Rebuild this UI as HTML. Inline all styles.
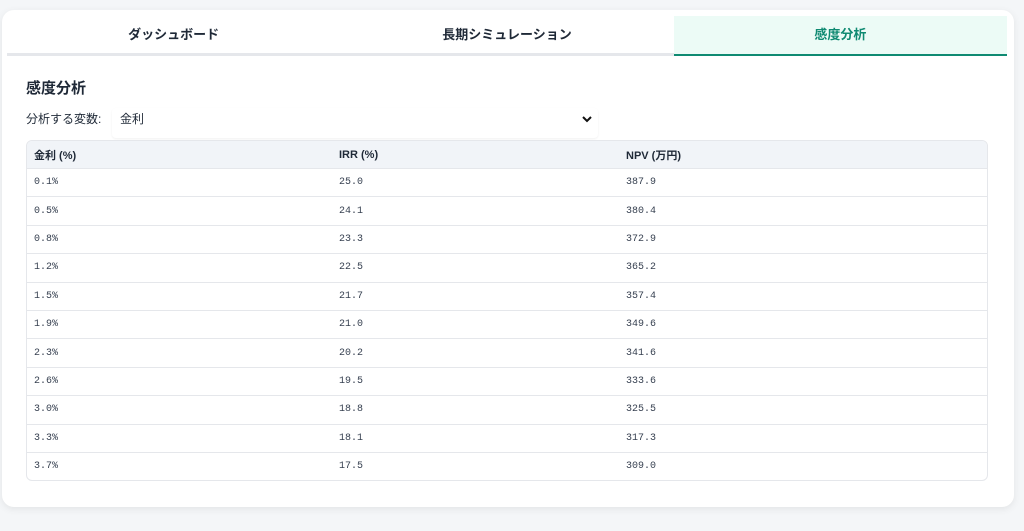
<!DOCTYPE html><html><head><meta charset="utf-8"><style>
body{margin:0;width:1024px;height:531px;background:#f4f6f8;font-family:"Liberation Sans","Noto Sans CJK JP",sans-serif;color:#1f2937;overflow:hidden}
.card{position:absolute;left:2px;top:10px;width:1012px;height:497px;background:#fff;border-radius:12px;box-shadow:0 2px 8px rgba(0,0,0,.08)}
.tabs{position:absolute;left:5px;top:6px;width:1000px;height:37px;border-bottom:3px solid #e5e7eb;display:flex}
.tab{flex:1;text-align:center;line-height:37px;font-size:13px;font-weight:bold;color:#1f2937}
.tab.a{background:#ecfbf6;color:#0f8a72;border-bottom:2px solid #0f8a72;margin-bottom:-3px;height:38px}
h2{position:absolute;left:24px;top:67px;margin:0;font-size:15px;font-weight:bold}
.lab{position:absolute;left:24px;top:100px;font-size:12px}
.sel{position:absolute;left:110px;top:98px;width:486px;height:30px;border-radius:4px;box-shadow:0 1px 2px rgba(0,0,0,.06);font-size:12px}
.sel span{position:absolute;left:8px;top:2px}
.sel svg{position:absolute;right:4px;top:4px}
table{position:absolute;left:24px;top:130px;width:962px;border-collapse:separate;border-spacing:0;border:1px solid #e5e7eb;border-radius:6px;overflow:hidden;font-size:10px}
th{background:#f1f4f8;height:27px;text-align:left;padding:0 7px;font-size:11px;font-weight:bold}
td{height:27.4px;padding:0 7px;border-top:1px solid #e5e7eb;font-family:"Liberation Mono",monospace;color:#374151}
</style></head><body><div class="card">
<div class="tabs"><div class="tab">ダッシュボード</div><div class="tab">長期シミュレーション</div><div class="tab a">感度分析</div></div>
<h2>感度分析</h2>
<div class="lab">分析する変数:</div>
<div class="sel"><span>金利</span><svg width="14" height="14" viewBox="0 0 14 14"><path d="M3 5l4 4 4-4" stroke="#111" stroke-width="2" fill="none"/></svg></div>
<table>
<tr><th style="width:291px">金利 (%)</th><th style="width:273px">IRR (%)</th><th>NPV (万円)</th></tr>
<tr><td>0.1%</td><td>25.0</td><td>387.9</td></tr>
<tr><td>0.5%</td><td>24.1</td><td>380.4</td></tr>
<tr><td>0.8%</td><td>23.3</td><td>372.9</td></tr>
<tr><td>1.2%</td><td>22.5</td><td>365.2</td></tr>
<tr><td>1.5%</td><td>21.7</td><td>357.4</td></tr>
<tr><td>1.9%</td><td>21.0</td><td>349.6</td></tr>
<tr><td>2.3%</td><td>20.2</td><td>341.6</td></tr>
<tr><td>2.6%</td><td>19.5</td><td>333.6</td></tr>
<tr><td>3.0%</td><td>18.8</td><td>325.5</td></tr>
<tr><td>3.3%</td><td>18.1</td><td>317.3</td></tr>
<tr><td>3.7%</td><td>17.5</td><td>309.0</td></tr>
</table></div></body></html>
